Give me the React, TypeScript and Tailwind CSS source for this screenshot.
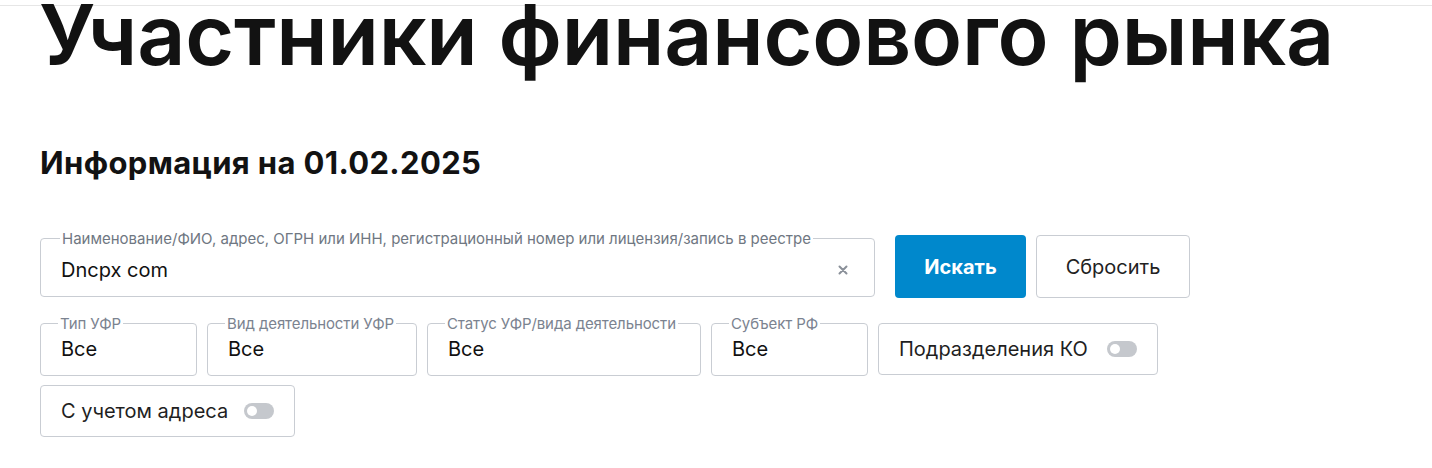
import React from 'react';

function Toggle() {
  return (
    <span className="relative inline-block h-[16px] w-[30px] rounded-full bg-[#c5c8cd]">
      <span className="absolute left-[3px] top-[3px] h-[10px] w-[10px] rounded-full bg-white" />
    </span>
  );
}

function SelectBox({ label, width }: { label: string; width: string }) {
  return (
    <fieldset className={`${width} h-[60px] min-w-0 shrink-0 rounded-[4px] border border-[#c9cdd3] px-[20px]`}>
      <legend className="-ml-[3px] whitespace-nowrap px-[2px] text-[15px] leading-[15px] tracking-[-0.1px] text-[#7b8390]">
        {label}
      </legend>
      <div className="mt-[6px] text-[20px] leading-[24px] text-[#111]">Все</div>
    </fieldset>
  );
}

function ToggleBox({ label, width }: { label: string; width: string }) {
  return (
    <div className={`${width} mt-[7px] flex h-[52px] shrink-0 items-center justify-between rounded-[4px] border border-[#c9cdd3] px-[20px]`}>
      <span className="text-[20px] text-[#1f1f1f]">{label}</span>
      <Toggle />
    </div>
  );
}

export default function App() {
  return (
    <div className="min-h-[468px] bg-white pt-[5px] font-['Inter',sans-serif] text-[#121212]">
      <div className="border-t border-[#e6e6e6]">
        <h1 className="-mt-[19px] whitespace-nowrap pl-[39px] text-[84px] font-semibold leading-[96px] tracking-[-0.2px] text-[#121212]">
          Участники финансового рынка
        </h1>
      </div>

      <div className="px-[40px]">
        <h2 className="mt-[62px] text-[31px] font-bold leading-[36px] tracking-[0.35px]">Информация на 01.02.2025</h2>

        <div className="mt-[50px] flex items-start gap-[10px]">
          <fieldset className="mr-[10px] h-[66px] w-[835px] min-w-0 rounded-[4px] border border-[#c9cdd3] pl-[20px] pr-[26px]">
            <legend className="-ml-[1px] whitespace-nowrap px-[2px] text-[15px] leading-[15px] text-[#6f7782]">
              Наименование/ФИО, адрес, ОГРН или ИНН, регистрационный номер или лицензия/запись в реестре
            </legend>
            <div className="mt-[12px] flex w-full items-center justify-between">
              <span className="text-[20px] leading-[24px] text-[#111]">Dncpx com</span>
              <svg width="10" height="10" viewBox="0 0 10 10" className="text-[#8a9099]">
                <path d="M1.5 1.5 L8.5 8.5 M8.5 1.5 L1.5 8.5" stroke="currentColor" strokeWidth="2" strokeLinecap="round" />
              </svg>
            </div>
          </fieldset>
          <button className="mt-[4px] h-[63px] w-[131px] rounded-[4px] bg-[#0088cc] text-[20px] font-bold text-white">
            Искать
          </button>
          <button className="mt-[4px] h-[63px] w-[154px] rounded-[4px] border border-[#c9cdd3] bg-white text-[20px] text-[#222]">
            Сбросить
          </button>
        </div>

        <div className="mt-[18px] flex flex-wrap items-start gap-x-[10px] gap-y-[2px]">
          <SelectBox label="Тип УФР" width="w-[157px]" />
          <SelectBox label="Вид деятельности УФР" width="w-[210px]" />
          <SelectBox label="Статус УФР/вида деятельности" width="w-[274px]" />
          <SelectBox label="Субъект РФ" width="w-[157px]" />
          <ToggleBox label="Подразделения КО" width="w-[280px]" />
          <ToggleBox label="С учетом адреса" width="w-[255px]" />
        </div>
      </div>
    </div>
  );
}
